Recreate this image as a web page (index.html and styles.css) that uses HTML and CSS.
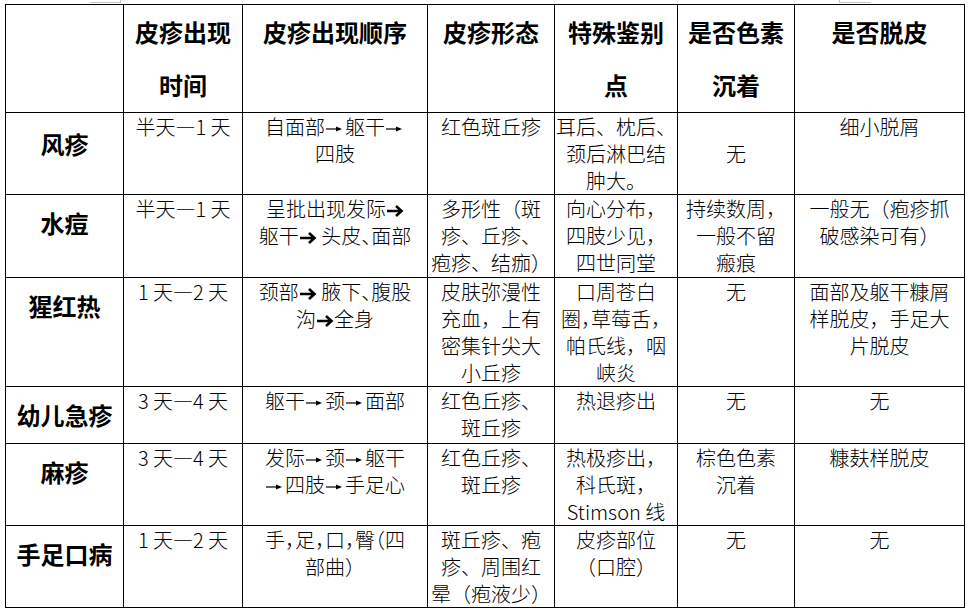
FILE: index.html
```html
<!DOCTYPE html>
<html lang="zh-CN">
<head>
<meta charset="utf-8">
<title>出疹性疾病鉴别</title>
<link rel="stylesheet" href="styles.css">
</head>
<body>
<div class="page">
  <span class="mark mark-a"></span>
  <span class="mark mark-b"></span>
  <table class="grid">
    <colgroup>
      <col class="c1"><col class="c2"><col class="c3"><col class="c4"><col class="c5"><col class="c6"><col class="c7">
    </colgroup>
    <thead>
      <tr class="r-head">
        <th></th>
        <th>皮疹出现<br>时间</th>
        <th>皮疹出现顺序</th>
        <th>皮疹形态</th>
        <th>特殊鉴别<br>点</th>
        <th>是否色素<br>沉着</th>
        <th>是否脱皮</th>
      </tr>
    </thead>
    <tbody>
      <tr class="r1">
        <th class="label lab-first">风疹</th>
        <td>半天—1 天</td>
        <td>自面部<span class="arw"><svg viewBox="0 0 20 20"><line x1="1" y1="10" x2="12" y2="10"/><polygon points="11,7.5 17,10 11,12.5"/></svg></span>躯干<span class="arw"><svg viewBox="0 0 20 20"><line x1="1" y1="10" x2="12" y2="10"/><polygon points="11,7.5 17,10 11,12.5"/></svg></span><br>四肢</td>
        <td>红色斑丘疹</td>
        <td>耳后、枕后、<br>颈后淋巴结<br>肿大。</td>
        <td><br>无</td>
        <td>细小脱屑</td>
      </tr>
      <tr class="r2">
        <th class="label">水痘</th>
        <td>半天—1 天</td>
        <td>呈批出现发际<span class="barw"><svg viewBox="0 0 18 20"><path d="M1 10 H15 M10 5 L15.5 10 L10 15"/></svg></span><br>躯干<span class="barw"><svg viewBox="0 0 18 20"><path d="M1 10 H15 M10 5 L15.5 10 L10 15"/></svg></span> 头皮<span class="half">、</span>面部</td>
        <td>多形性（斑<br>疹、丘疹、<br>疱疹、结痂）</td>
        <td>向心分布，<br>四肢少见，<br>四世同堂</td>
        <td>持续数周，<br>一般不留<br>瘢痕</td>
        <td>一般无（疱疹抓<br>破感染可有）</td>
      </tr>
      <tr class="r3">
        <th class="label">猩红热</th>
        <td>1 天—2 天</td>
        <td>颈部<span class="barw"><svg viewBox="0 0 18 20"><path d="M1 10 H15 M10 5 L15.5 10 L10 15"/></svg></span> 腋下<span class="half">、</span>腹股<br>沟<span class="barw"><svg viewBox="0 0 18 20"><path d="M1 10 H15 M10 5 L15.5 10 L10 15"/></svg></span>全身</td>
        <td>皮肤弥漫性<br>充血，上有<br>密集针尖大<br>小丘疹</td>
        <td>口周苍白<br>圈<span class="half">，</span>草莓舌，<br>帕氏线，咽<br>峡炎</td>
        <td>无</td>
        <td>面部及躯干糠屑<br>样脱皮，手足大<br>片脱皮</td>
      </tr>
      <tr class="r4">
        <th class="label">幼儿急疹</th>
        <td>3 天—4 天</td>
        <td>躯干<span class="arw"><svg viewBox="0 0 20 20"><line x1="1" y1="10" x2="12" y2="10"/><polygon points="11,7.5 17,10 11,12.5"/></svg></span>颈<span class="arw"><svg viewBox="0 0 20 20"><line x1="1" y1="10" x2="12" y2="10"/><polygon points="11,7.5 17,10 11,12.5"/></svg></span>面部</td>
        <td>红色丘疹、<br>斑丘疹</td>
        <td>热退疹出</td>
        <td>无</td>
        <td>无</td>
      </tr>
      <tr class="r5">
        <th class="label">麻疹</th>
        <td>3 天—4 天</td>
        <td>发际<span class="arw"><svg viewBox="0 0 20 20"><line x1="1" y1="10" x2="12" y2="10"/><polygon points="11,7.5 17,10 11,12.5"/></svg></span>颈<span class="arw"><svg viewBox="0 0 20 20"><line x1="1" y1="10" x2="12" y2="10"/><polygon points="11,7.5 17,10 11,12.5"/></svg></span>躯干<br><span class="arw"><svg viewBox="0 0 20 20"><line x1="1" y1="10" x2="12" y2="10"/><polygon points="11,7.5 17,10 11,12.5"/></svg></span>四肢<span class="arw"><svg viewBox="0 0 20 20"><line x1="1" y1="10" x2="12" y2="10"/><polygon points="11,7.5 17,10 11,12.5"/></svg></span>手足心</td>
        <td>红色丘疹、<br>斑丘疹</td>
        <td>热极疹出，<br>科氏斑，<br>Stimson 线</td>
        <td>棕色色素<br>沉着</td>
        <td>糠麸样脱皮</td>
      </tr>
      <tr class="r6">
        <th class="label">手足口病</th>
        <td>1 天—2 天</td>
        <td><span class="half">手，足，口，臀（</span>四<br>部曲）</td>
        <td>斑丘疹、疱<br>疹、周围红<br>晕（疱液少）</td>
        <td>皮疹部位<br>（口腔）</td>
        <td>无</td>
        <td>无</td>
      </tr>
    </tbody>
  </table>
</div>
</body>
</html>
```

FILE: styles.css
```css
html, body {
  margin: 0;
  padding: 0;
  background: #ffffff;
}

body {
  font-family: "Noto Sans CJK SC", "Noto Sans", sans-serif;
  color: #000000;
}

.page {
  position: relative;
  padding: 4px 0 0 5px;
}

.mark {
  position: absolute;
  top: 0;
  height: 2px;
  border-bottom: 1px solid #c8c8c8;
}

.mark-a {
  left: 90px;
  width: 30px;
  border-right: 1px solid #c8c8c8;
}

.mark-b {
  left: 839px;
  width: 31px;
  border-left: 1px solid #c8c8c8;
}

.grid {
  border-collapse: collapse;
  table-layout: fixed;
  width: 959px;
}

.c1 { width: 118px; }
.c2 { width: 119px; }
.c3 { width: 185px; }
.c4 { width: 127px; }
.c5 { width: 123px; }
.c6 { width: 117px; }
.c7 { width: 170px; }

.grid th,
.grid td {
  border: 1px solid #000000;
  padding: 0;
  vertical-align: top;
  text-align: center;
  white-space: nowrap;
}

.grid thead th {
  font-size: 24px;
  font-weight: 700;
  line-height: 53px;
}

.grid td {
  font-size: 20px;
  font-weight: 300;
  line-height: 27px;
}

.grid .label {
  font-size: 24px;
  font-weight: 700;
  line-height: 56px;
}

.grid .lab-first {
  padding-top: 3px;
}

.r-head { height: 108px; }
.r1 { height: 82px; }
.r2 { height: 83px; }
.r3 { height: 108px; }
.r4 { height: 56px; }
.r5 { height: 81px; }
.r6 { height: 82px; }

.half {
  font-feature-settings: "halt" 1;
}

.arw,
.barw {
  display: inline-block;
  vertical-align: -4px;
  height: 20px;
}

.arw { width: 20px; }
.barw { width: 18px; }

.arw svg,
.barw svg {
  display: block;
  width: 100%;
  height: 100%;
}

.arw line {
  stroke: #000000;
  stroke-width: 1.2;
}

.arw polygon {
  fill: #000000;
}

.barw path {
  fill: none;
  stroke: #000000;
  stroke-width: 2.6;
  stroke-linecap: butt;
  stroke-linejoin: miter;
}
```
